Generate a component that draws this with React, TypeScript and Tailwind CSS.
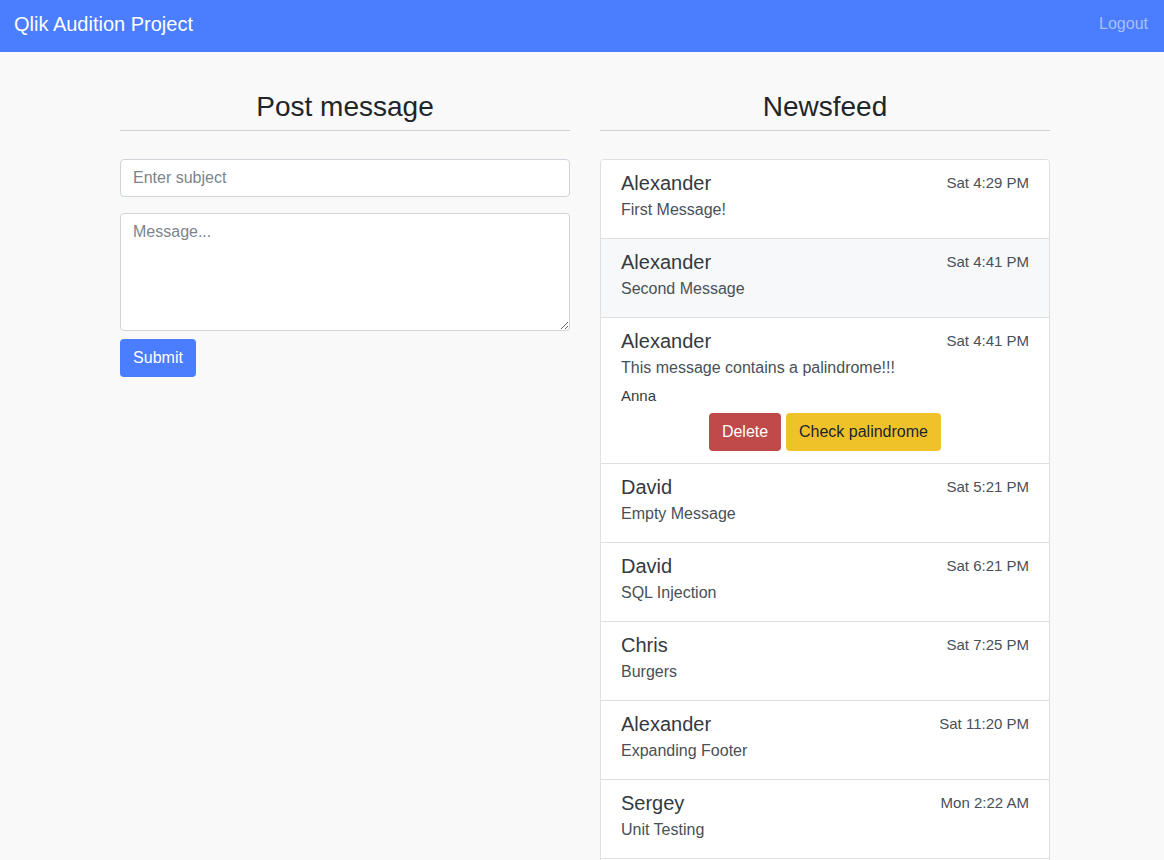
import React from 'react'

interface Post {
  author: string
  time: string
  text: string
  extra?: string
  hover?: boolean
}

const posts: Post[] = [
  { author: 'Alexander', time: 'Sat 4:29 PM', text: 'First Message!' },
  { author: 'Alexander', time: 'Sat 4:41 PM', text: 'Second Message', hover: true },
  {
    author: 'Alexander',
    time: 'Sat 4:41 PM',
    text: 'This message contains a palindrome!!!',
    extra: 'Anna',
  },
  { author: 'David', time: 'Sat 5:21 PM', text: 'Empty Message' },
  { author: 'David', time: 'Sat 6:21 PM', text: 'SQL Injection' },
  { author: 'Chris', time: 'Sat 7:25 PM', text: 'Burgers' },
  { author: 'Alexander', time: 'Sat 11:20 PM', text: 'Expanding Footer' },
  { author: 'Sergey', time: 'Mon 2:22 AM', text: 'Unit Testing' },
  { author: 'Sergey', time: 'Mon 3:10 AM', text: 'Integration' },
]

function FeedItem({ post, first }: { post: Post; first: boolean }) {
  return (
    <div
      className={`px-5 pt-[11px] pb-4 ${first ? '' : 'border-t border-[#dfdfdf]'} ${
        post.hover ? 'bg-[#f7f8fa]' : 'bg-white'
      }`}
    >
      <div className="flex items-start justify-between">
        <div className="text-[20px] leading-[24px] text-[#343a40]">{post.author}</div>
        <div className="mt-[1px] text-[15px] leading-[22px] text-[#495057]">{post.time}</div>
      </div>
      <div className="mt-[3px] text-[16px] leading-[24px] text-[#495057]">{post.text}</div>
      {post.extra && (
        <>
          <div className="mt-[5px] text-[15px] leading-[21px] text-[#343a40]">{post.extra}</div>
          <div className="mt-[7px] -mb-[4px] flex justify-center gap-[5px]">
            <button className="h-[38px] w-[72px] rounded-[4px] bg-[#bf4a4a] text-[16px] text-white">
              Delete
            </button>
            <button className="h-[38px] w-[155px] rounded-[4px] bg-[#f0c22a] text-[16px] text-[#212529]">
              Check palindrome
            </button>
          </div>
        </>
      )}
    </div>
  )
}

export default function App() {
  return (
    <div className="min-h-screen bg-[#f9f9f9] font-['Liberation_Sans',Arial,sans-serif]">
      <nav className="flex h-[52px] items-center justify-between bg-[#4a7dff] px-[14px] pb-1">
        <span className="text-[20px] text-white">Qlik Audition Project</span>
        <span className="pr-[2px] text-[16px] text-[#a9c0ff]">Logout</span>
      </nav>

      <div className="flex gap-[30px] pl-[120px] pt-[37px]">
        <div className="w-[450px]">
          <h2 className="border-b border-[#cfcfcf] pb-[5px] text-center text-[28px] leading-[36px] text-[#212529]">
            Post message
          </h2>
          <input
            className="mt-[28px] block h-[38px] w-full rounded-[4px] border border-[#ced4da] bg-white px-3 text-[16px] text-[#495057] outline-none placeholder:text-[#7c848c]"
            placeholder="Enter subject"
          />
          <textarea
            className="mt-4 block h-[118px] w-full rounded-[4px] border border-[#ced4da] bg-white px-3 py-[6px] text-[16px] text-[#495057] outline-none placeholder:text-[#7c848c]"
            placeholder="Message..."
          />
          <button className="mt-2 h-[38px] w-[76px] rounded-[4px] bg-[#4a7dff] text-[16px] text-white">
            Submit
          </button>
        </div>

        <div className="w-[450px]">
          <h2 className="border-b border-[#cfcfcf] pb-[5px] text-center text-[28px] leading-[36px] text-[#212529]">
            Newsfeed
          </h2>
          <div className="mt-[28px] overflow-hidden rounded-[4px] border border-[#dfdfdf]">
            {posts.map((p, i) => (
              <FeedItem key={i} post={p} first={i === 0} />
            ))}
          </div>
        </div>
      </div>
    </div>
  )
}
